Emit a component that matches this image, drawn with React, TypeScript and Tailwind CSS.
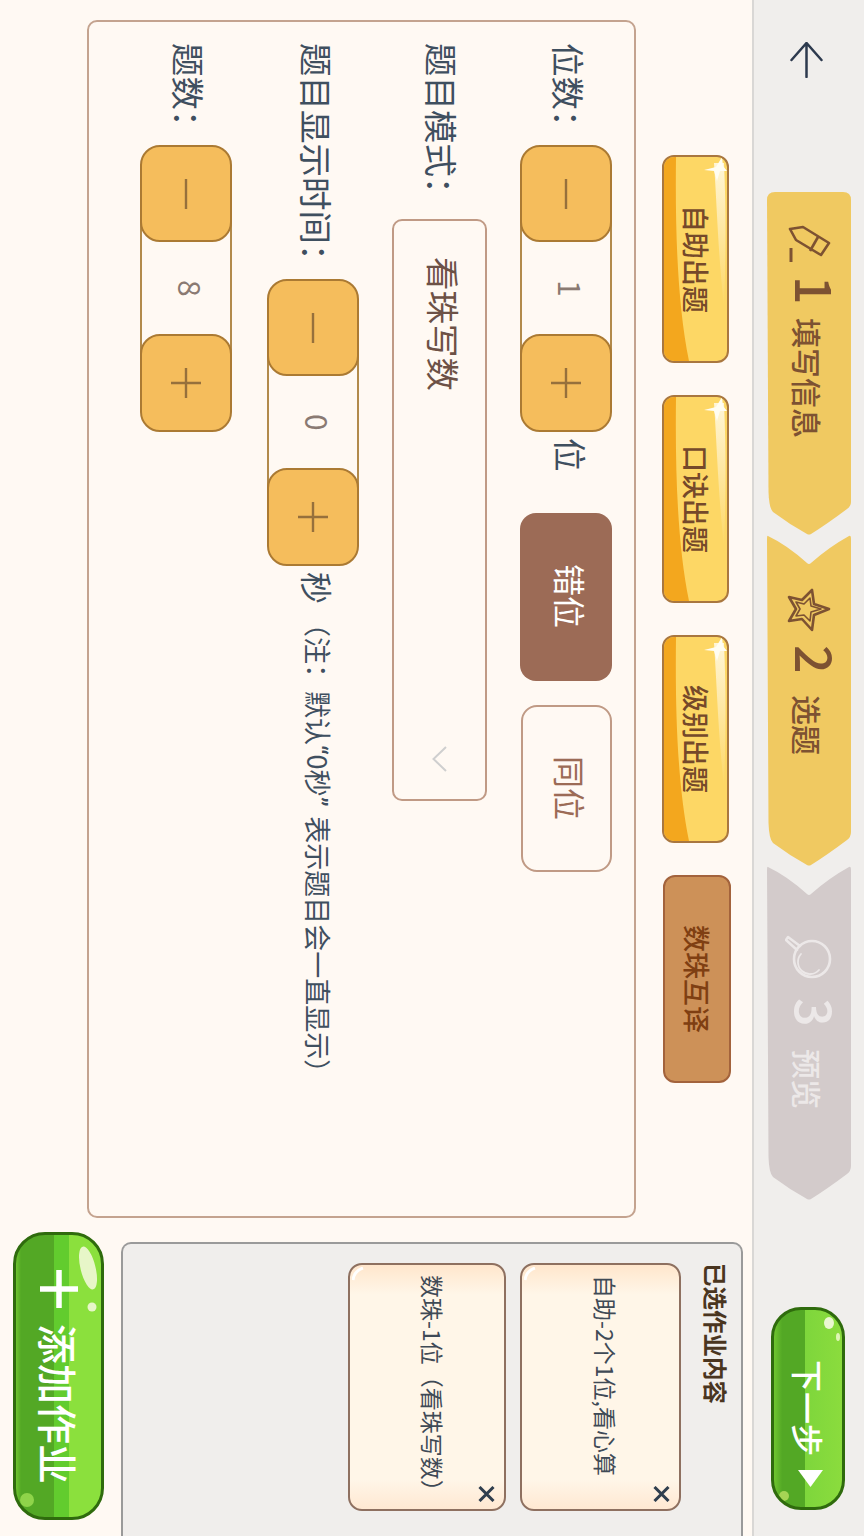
import React from "react";

const steps = [
  {
    num: "1",
    label: "填写信息",
    h: "h-[343px]",
    pt: "pt-[33px]",
    numMt: "mt-[11px]",
    labelMt: "mt-[13px]",
    fill: "#f0c961",
    text: "text-[#7d5232]",
    path: "M8 0H76Q84 0 84 8V310Q84 314 80 317Q60 332 44 342Q42 343 40 342Q22 332 6 320Q2 316 1.5 300L0 8Q0 0 8 0Z",
  },
  {
    num: "2",
    label: "选题",
    h: "h-[331px]",
    pt: "pt-[53px]",
    numMt: "mt-[13px]",
    labelMt: "mt-[21px]",
    fill: "#f0c961",
    text: "text-[#7d5232]",
    path: "M1 1Q20 10 40 28Q42 30 44 28Q62 12 82 1Q84 0 84 4V297Q84 302 80 305Q60 320 44 330Q42 331 40 330Q22 320 6 308Q2 304 1.5 288L0 4Q0 0 1 1Z",
  },
  {
    num: "3",
    label: "预览",
    h: "h-[334px]",
    pt: "pt-[68px]",
    numMt: "mt-[18px]",
    labelMt: "mt-[22px]",
    fill: "#d3cbcb",
    text: "text-[#ece8e8]",
    path: "M1 1Q20 10 40 28Q42 30 44 28Q62 12 82 1Q84 0 84 4V300Q84 305 80 308Q60 323 44 333Q42 334 40 333Q22 323 6 311Q2 307 1.5 291L0 4Q0 0 1 1Z",
  },
];

const StepIcon: React.FC<{ num: string }> = ({ num }) => {
  if (num === "1") {
    return (
      <svg width="44" height="40" viewBox="0 0 44 40" fill="none" stroke="#7d5232" strokeWidth="2.6" strokeLinejoin="round">
        <path d="M3 4L16 2L42 18L34 30L9 15Z" />
        <path d="M31 12L23 26" />
        <path d="M4 23V37" strokeWidth="3" />
      </svg>
    );
  }
  if (num === "2") {
    return (
      <svg width="44" height="44" viewBox="0 0 44 44" fill="none" stroke="#7d5232" strokeLinejoin="round">
        <path d="M42 21L27 27L25 42L15 31L2 33L9 21L2 9L15 12L25 2L27 16Z" strokeWidth="2.6" />
        <path d="M34 21L24 24L23 33L17 27L9 28L13 21L9 14L17 16L23 10L24 18Z" strokeWidth="1.6" />
      </svg>
    );
  }
  return (
    <svg width="48" height="46" viewBox="0 0 48 46" fill="none" stroke="#ece8e8" strokeLinecap="round">
      <circle cx="27" cy="25" r="18" strokeWidth="2.6" />
      <path d="M16 20A12 12 0 0 0 34 36" strokeWidth="1.8" />
      <path d="M15 12L3 3L1 6L12 16" strokeWidth="2.4" strokeLinejoin="round" />
    </svg>
  );
};

const Stepper: React.FC<{ value: string }> = ({ value }) => (
  <div className="flex h-[287px] w-[92px] shrink-0">
    <button className="relative z-10 flex h-[97px] w-full shrink-0 items-center justify-center rounded-[20px] border-2 border-[#ab7a33] bg-[#f5bd5c]">
      <svg width="4" height="30" viewBox="0 0 4 30">
        <path d="M2 0V30" stroke="#96703c" strokeWidth="2.4" />
      </svg>
    </button>
    <div className="-mb-5 -mt-5 flex flex-1 items-center justify-center border-l-2 border-r-2 border-[#b28a4b] pl-[8px] text-[30px] text-[#8a7a72]">
      {value}
    </div>
    <button className="relative z-10 flex h-[98px] w-full shrink-0 items-center justify-center rounded-[20px] border-2 border-[#ab7a33] bg-[#f5bd5c]">
      <svg width="30" height="30" viewBox="0 0 30 30">
        <path d="M15 0V30M0 15H30" stroke="#96703c" strokeWidth="2.4" />
      </svg>
    </button>
  </div>
);

const Tab: React.FC<{ label: string }> = ({ label }) => (
  <button className="relative flex h-[208px] w-[67px] items-center justify-center overflow-hidden rounded-[12px] border-2 border-[#a9773f] bg-[#fdd765] text-[27px] font-medium text-[#75492a]">
    <svg className="absolute inset-0" width="63" height="204" viewBox="0 0 63 204">
      <defs>
        <linearGradient id="tabShine" x1="0" y1="0" x2="0" y2="1">
          <stop offset="0" stopColor="#fff6d8" />
          <stop offset="1" stopColor="#fdd765" />
        </linearGradient>
      </defs>
      <path d="M0 0H12C11 80 14 150 25 204H0Z" fill="#f3a71e" />
      <path d="M50 6C53 50 54 95 60 150C62 100 62 50 60 6Z" fill="url(#tabShine)" />
      <path d="M40 13L52 10L58 0L59 9L63 14L56 14L53 24L50 14Z" fill="#fffdf2" />
    </svg>
    <span className="relative">{label}</span>
  </button>
);

const Card: React.FC<{ label: string; w: string; pr: string }> = ({ label, w, pr }) => (
  <div className={`relative flex h-[248px] shrink-0 ${w} ${pr} items-start rounded-[14px] border-2 border-[#8e7060] bg-[linear-gradient(to_bottom,#ffe6cc,#fff6e8_12%,#fff6e8_88%,#ffe8d2)] pt-[10px] text-[23px] text-[#3f4a56]`}>
    <svg className="absolute left-[2px] top-[2px]" width="14" height="14" viewBox="0 0 14 14" fill="none">
      <path d="M1 13Q2 4 11 1" stroke="#ffffff" strokeWidth="3" />
    </svg>
    <span className="relative">{label}</span>
    <svg className="absolute bottom-[7px] right-[9px]" width="17" height="16" viewBox="0 0 17 16">
      <path d="M1.5 1L15.5 15M15.5 1L1.5 15" stroke="#2f3e4e" strokeWidth="3" />
    </svg>
  </div>
);

export default function App() {
  return (
    <div className="flex h-[1536px] w-[864px] flex-col overflow-hidden bg-[#fff9f3] font-['Noto_Sans_CJK_SC',sans-serif] [text-orientation:sideways] [writing-mode:vertical-rl]">
      {/* right rail */}
      <div className="flex h-full w-[112px] shrink-0 items-start border-l-2 border-[#d9d7d5] bg-[#f0eeec] pt-[42px]">
        <svg className="mr-[41px]" width="33" height="36" viewBox="0 0 33 36" fill="none" stroke="#2d3a4e" strokeWidth="2.5" strokeLinecap="round">
          <path d="M16.5 1V35M1.5 18L16.5 1L31.5 18" />
        </svg>

        <div className="mr-[13px] mt-[114px] flex w-[84px] shrink-0">
          {steps.map((step) => (
            <div key={step.num} className={`relative flex w-[84px] shrink-0 items-center ${step.h} ${step.pt} ${step.text}`}>
              <svg className="absolute left-0 top-0" width="84" height="100%">
                <path d={step.path} fill={step.fill} />
              </svg>
              <div className="relative">
                <StepIcon num={step.num} />
              </div>
              <span className={`relative ${step.numMt} pl-[16px] text-[50px] font-medium leading-[60px]`}>{step.num}</span>
              <span className={`relative ${step.labelMt} pr-[4px] text-[30px] font-medium`}>{step.label}</span>
            </div>
          ))}
        </div>

        <button className="relative mr-[19px] mt-[107px] flex h-[203px] w-[74px] shrink-0 items-center overflow-hidden rounded-[30px] border-[3px] border-[#2f6b0d] bg-[linear-gradient(to_right,#6fc52f,#53a825_12%,#53a825_46%,#7ed63c_46%,#8bdc3d)] pl-[1px] pt-[50px] text-white">
          <svg className="absolute right-0 top-0" width="24" height="50" viewBox="0 0 24 50">
            <ellipse cx="11" cy="13" rx="5" ry="6" fill="#eaf7d0" />
            <ellipse cx="20" cy="27" rx="2" ry="4" fill="#dff5b5" />
          </svg>
          <svg className="absolute bottom-[4px] left-[4px]" width="12" height="14" viewBox="0 0 12 14">
            <circle cx="6" cy="7" r="5" fill="#a6d455" />
          </svg>
          <span className="text-[32px] font-medium">下一步</span>
          <svg className="ml-[3px] mt-[14px]" width="25" height="17" viewBox="0 0 25 17">
            <path d="M0 0H25L12.5 17Z" fill="#fff" />
          </svg>
        </button>
      </div>

      {/* main area */}
      <div className="flex h-full w-[752px]">
        <div className="flex h-[1232px] w-full shrink-0 flex-col">
          <div className="mr-[21px] flex h-full w-[69px] shrink-0 items-end gap-[32px] pt-[155px]">
            <Tab label="自助出题" />
            <Tab label="口诀出题" />
            <Tab label="级别出题" />
            <button className="flex h-[208px] w-[68px] items-center justify-center self-start rounded-[12px] border-2 border-[#a3633c] bg-[#cd9158] text-[27px] font-medium text-[#7f3f12]">
              数珠互译
            </button>
          </div>

          <div className="mr-[26px] mt-[20px] flex h-[1198px] w-[549px] shrink-0 flex-col rounded-[10px] border-2 border-[#c4a38f] pr-[22px] pt-[21px] text-[33.5px] text-[#3f4f5f]">
            <div className="flex h-full w-[92px] shrink-0 items-center">
              <span className="h-[102px] shrink-0 pl-[6px]">位数：</span>
              <Stepper value="1" />
              <span className="mt-[6px] shrink-0 pl-[10px]">位</span>
              <button className="mt-[41px] h-[168px] w-[92px] rounded-[16px] bg-[#9c6b56] pl-[10px] text-[32px] text-white">错位</button>
              <button className="mt-[24px] h-[167px] w-[91px] rounded-[16px] border-2 border-[#c09a85] pl-[10px] text-[32px] text-[#9c6b56]">同位</button>
            </div>

            <div className="mr-[34px] flex h-full w-[94px] shrink-0 items-center">
              <span className="h-[176px] shrink-0 pl-[6px]">题目模式：</span>
              <div className="flex h-[582px] w-[95px] shrink-0 items-center justify-between rounded-[10px] border-2 border-[#c09a85] pb-[27px] pt-[36px] text-[#6d5146]">
                <span className="pl-[10px]">看珠写数</span>
                <svg width="15" height="26" viewBox="0 0 15 26" fill="none" stroke="#cfcfcf" strokeWidth="2">
                  <path d="M14 1L1.5 13L14 25" />
                </svg>
              </div>
            </div>

            <div className="mr-[33px] flex h-full w-[92px] shrink-0 items-center">
              <span className="h-[236px] shrink-0 pl-[8px]">题目显示时间：</span>
              <Stepper value="0" />
              <span className="mt-[6px] shrink-0 pl-[10px] text-[32px]">秒</span>
              <span className="mt-[6px] shrink-0 pl-[8px] text-[27px]">
                （注：默认<span className="font-['Roboto',sans-serif]">“</span>0秒<span className="pb-[10px] font-['Roboto',sans-serif]">”</span>表示题目会一直显示）
              </span>
            </div>

            <div className="mr-[35px] flex h-full w-[92px] shrink-0 items-center">
              <span className="h-[102px] shrink-0 pl-[6px]">题数：</span>
              <Stepper value="8" />
            </div>
          </div>
        </div>

        <div className="flex min-h-0 w-full flex-1 flex-col">
          <div className="mr-[9px] mt-[10px] flex h-[400px] w-[622px] shrink-0 flex-col rounded-t-[10px] border-2 border-b-0 border-[#9a9a9a] bg-[#f0eeec] pt-[19px]">
            <h2 className="mr-[12px] w-[26px] text-[23.5px] font-semibold leading-[26px] text-[#4a3520]">已选作业内容</h2>
            <div className="mr-[22px] flex flex-col gap-[14px]">
              <Card label="自助-2个1位,看心算" w="w-[161px]" pr="pr-[56px]" />
              <Card label="数珠-1位（看珠写数）" w="w-[158px]" pr="pr-[54px]" />
            </div>
          </div>

          <button className="relative mr-[17px] flex h-[288px] w-[91px] shrink-0 items-center overflow-hidden rounded-[32px] border-[3px] border-[#2f6b0d] bg-[linear-gradient(to_right,#6fc52f,#53a825_6%,#53a825_45%,#62cc2e_45%,#62cc2e_62%,#8be03d_62%,#8be03d)] pl-[1px] pt-[35px] text-white">
            <svg className="absolute right-0 top-0" width="36" height="84" viewBox="0 0 36 84">
              <ellipse cx="23" cy="33" rx="7.5" ry="22" transform="rotate(-14 23 33)" fill="#e7f6c8" />
              <circle cx="27" cy="72" r="4.5" fill="#e7f6c8" />
            </svg>
            <svg className="absolute bottom-[6px] left-[2px]" width="18" height="22" viewBox="0 0 18 22">
              <circle cx="9" cy="11" r="7" fill="#8fd44a" />
            </svg>
            <svg className="relative" width="38" height="38" viewBox="0 0 38 38">
              <path d="M19 0V38M0 19H38" stroke="#fff" strokeWidth="5.5" />
            </svg>
            <span className="relative mt-[16px] text-[40px] font-medium leading-[46px]">添加作业</span>
          </button>
        </div>
      </div>
    </div>
  );
}
